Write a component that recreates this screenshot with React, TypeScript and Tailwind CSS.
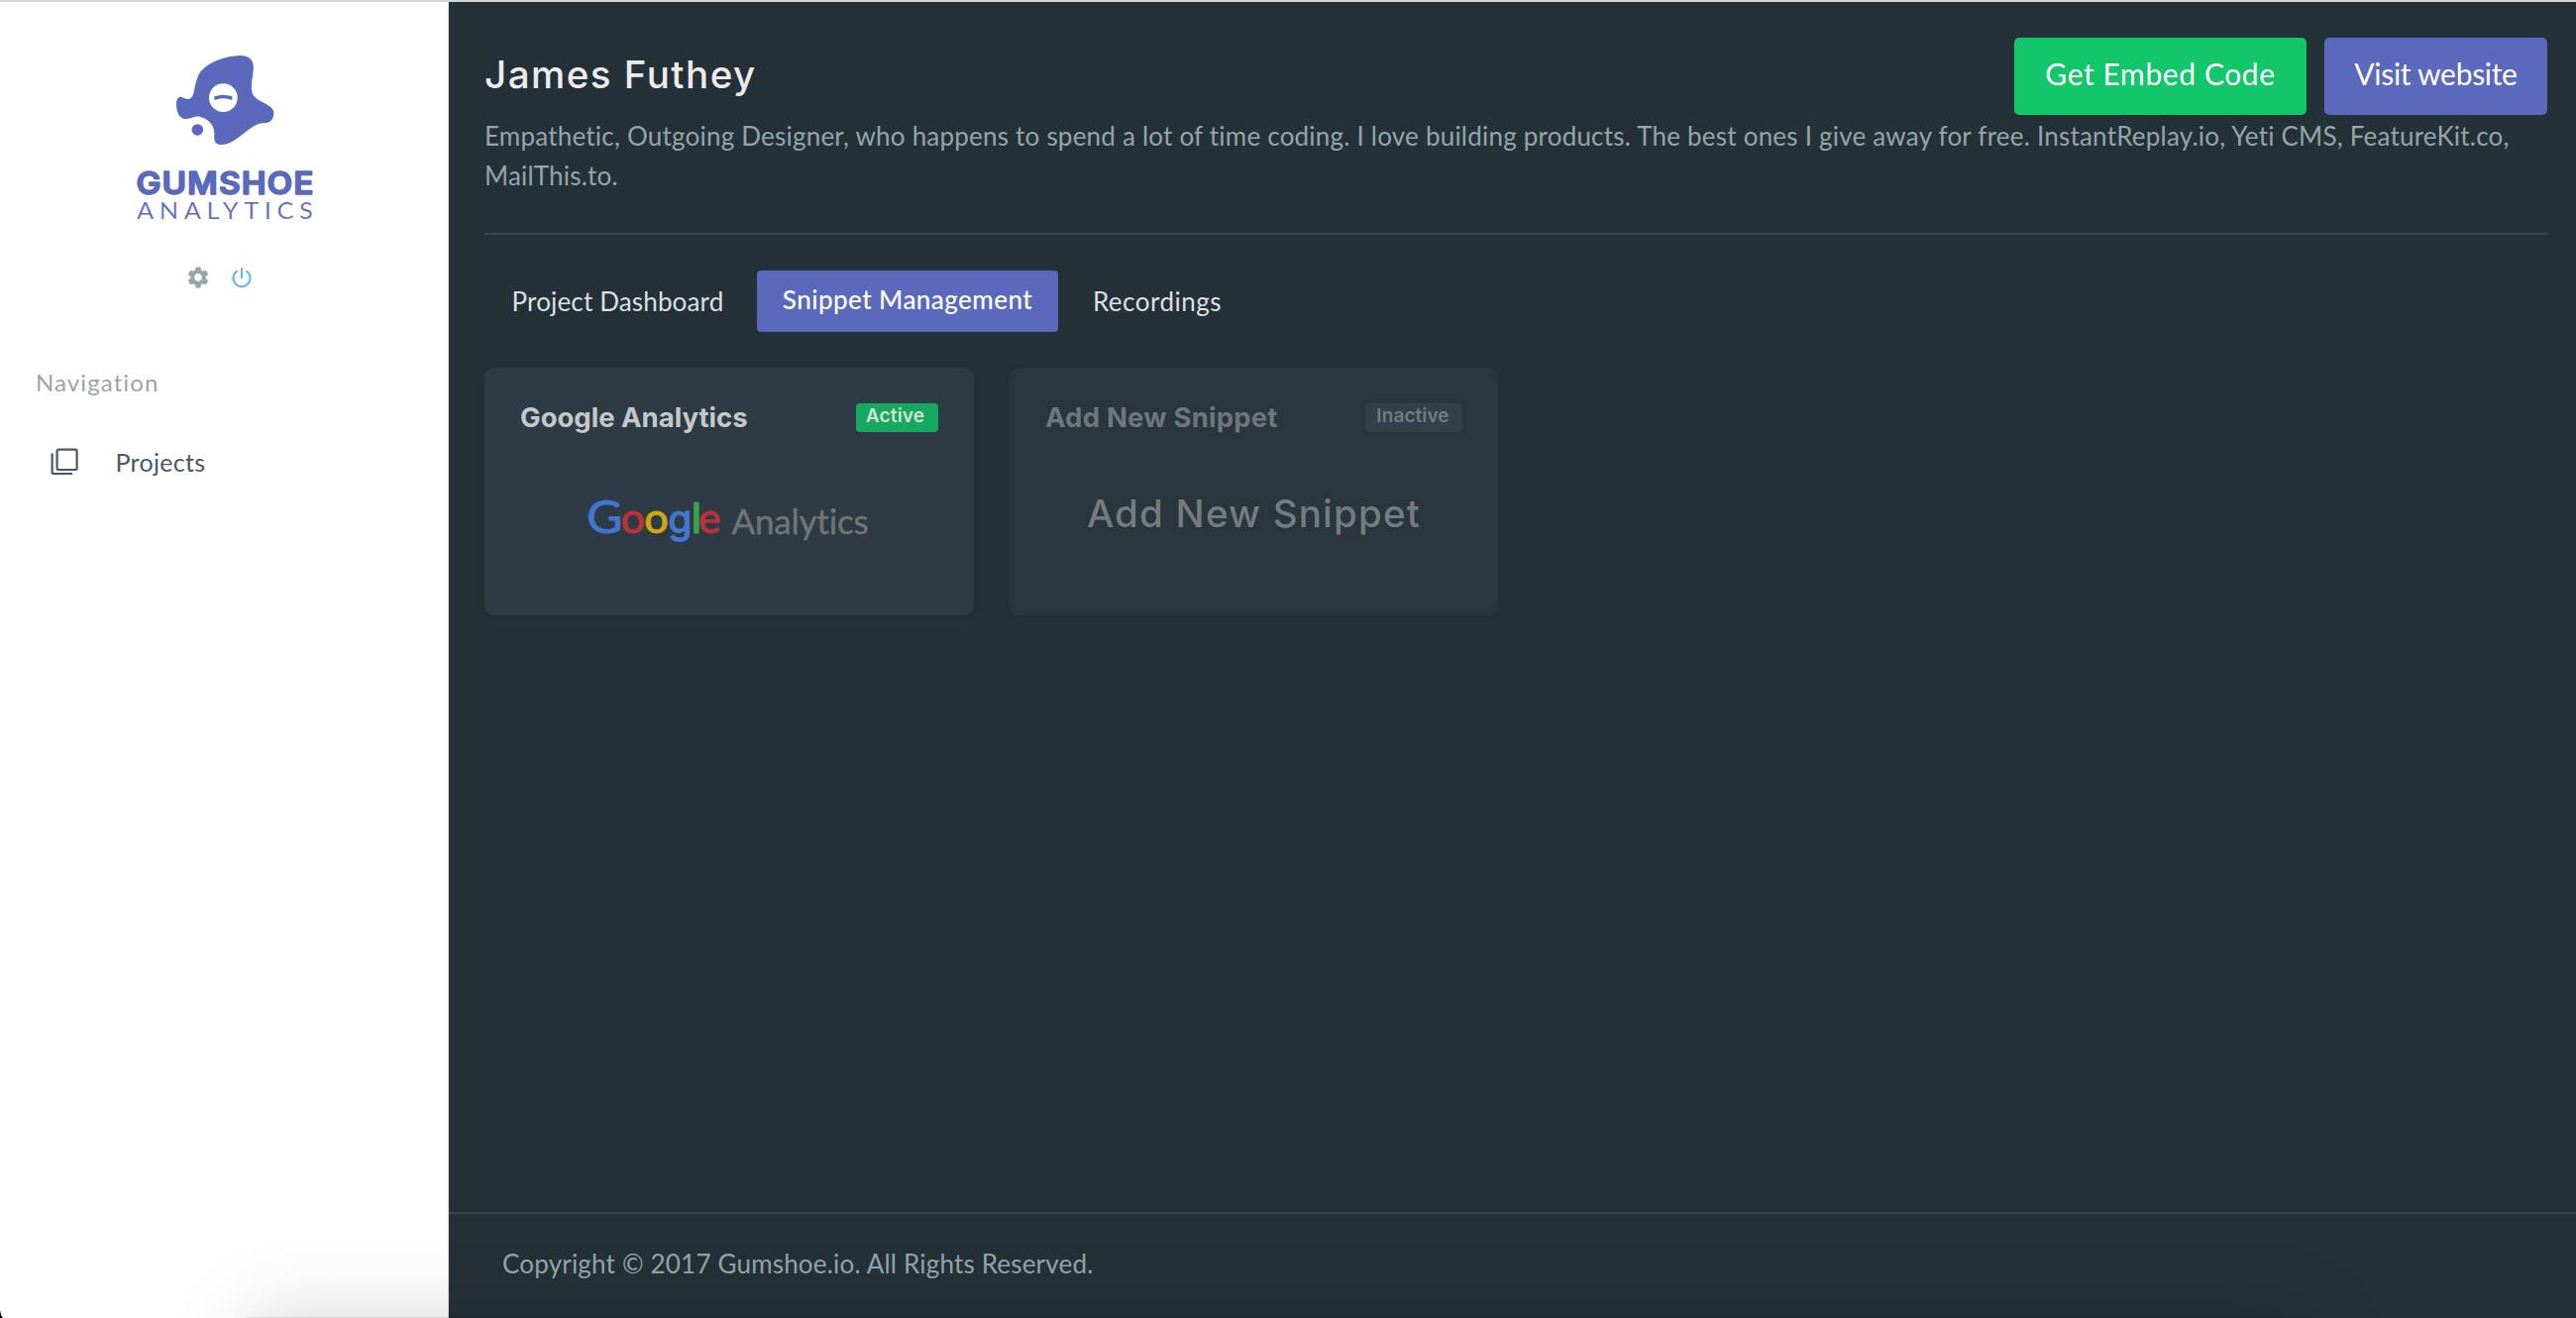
import type { ReactNode } from "react";
import { MdSettings } from "react-icons/md";

function BrandLogo() {
  return (
    <svg className="h-[180px] w-[190px]" viewBox="0 0 190 180" fill="#5a69bc" aria-label="Gumshoe Analytics">
      <g transform="translate(28 0) scale(0.33333)">
        <path d="M245 18C280 17 290 38 287 62C284 92 278 112 284 132C292 158 348 165 349 190C350 208 340 222 322 222C275 222 240 288 190 288C172 288 167 278 169 258C172 222 135 200 112 203C100 205 94 210 82 210C62 210 54 188 54 165C54 142 66 140 76 146C92 154 102 150 107 128C114 95 118 78 130 64C152 38 205 19 245 18Z" />
        <circle cx="196" cy="146" r="43" fill="#fff" />
        <path d="M169 142Q196 132 223 142V153Q196 143 169 153Z" />
        <circle cx="118" cy="243" r="17.5" />
      </g>
      <text x="5.5" y="145.5" fontFamily="Inter" fontWeight="600" fontSize="31.5" letterSpacing="1" textLength="180" lengthAdjust="spacingAndGlyphs" stroke="#5a69bc" strokeWidth="1.6" strokeLinejoin="round">
        GUMSHOE
      </text>
      <text x="6" y="170.5" fontFamily="Lato" fontWeight="400" fontSize="22.5" letterSpacing="5" textLength="183.5" lengthAdjust="spacingAndGlyphs" stroke="#fff" strokeWidth="0.2">
        ANALYTICS
      </text>
    </svg>
  );
}

function PowerIcon() {
  return (
    <svg className="h-[22px] w-[22px]" viewBox="0 0 22 22" fill="none" stroke="#64b1f4" strokeWidth="2" strokeLinecap="round">
      <path d="M11 2V11.2" />
      <path d="M6 4.8A8.5 8.5 0 1 0 16 4.8" />
    </svg>
  );
}

function ProjectsIcon() {
  return (
    <svg className="h-7 w-7" viewBox="0 0 28 28" fill="none" stroke="#445a66" strokeWidth="2.2">
      <rect x="6.6" y="1.6" width="20" height="20.4" rx="1.6" />
      <path d="M1.6 5.5V24.2Q1.6 26 3.4 26H22" />
    </svg>
  );
}

function GoogleAnalyticsLogo() {
  return (
    <svg className="h-[70px] w-[310px]" viewBox="0 0 310 70" strokeWidth="0.8" strokeLinejoin="round">
      <g fontFamily="Lato" fontSize="43" fontWeight="500">
        <text x="7" y="48.2" fontSize="46" fontWeight="400" fill="#4276cf" stroke="#4276cf" textLength="36.5" lengthAdjust="spacingAndGlyphs">G</text>
        <text x="41.6" y="48.2" fill="#bb3236" stroke="#bb3236">o</text>
        <text x="65.2" y="48.2" fill="#cfa615" stroke="#cfa615">o</text>
        <text x="89.2" y="48.2" fontFamily="Inter" fontSize="39" fill="#4276cf" stroke="#4276cf">g</text>
        <text x="112.4" y="48.2" fontFamily="Inter" fill="#36a353" stroke="#36a353">l</text>
        <text x="119.8" y="48.2" fill="#bb3236" stroke="#bb3236">e</text>
      </g>
      <text x="153.5" y="48.5" fontFamily="Lato" fontSize="35" letterSpacing="-0.2" fill="#717577" stroke="#717577" strokeWidth="0.4">Analytics</text>
    </svg>
  );
}

function Tab({ children, className }: { children: ReactNode; className: string }) {
  return <a className={`flex h-[62px] items-center justify-center rounded-[4px] text-[26px] whitespace-nowrap ${className}`}>{children}</a>;
}

export default function App() {
  return (
    <div className="relative flex h-[1330px] w-[2600px] overflow-hidden border-t-2 border-[#d3d5d6] bg-[#253138] font-[Lato,sans-serif]">
      <aside className="flex w-[453px] shrink-0 flex-col border-r border-[#d5d8da] bg-white">
        <div className="flex justify-center pt-12 pl-0.5">
          <BrandLogo />
        </div>
        <div className="mt-[37px] flex items-center pl-[187px]">
          <MdSettings className="h-[26px] w-[26px] text-[#97a6ad]" />
          <div className="ml-5">
            <PowerIcon />
          </div>
        </div>
        <div className="mt-[73px] pl-[36px] text-[24px] leading-[40px] tracking-[1.1px] text-[#97a6ad]">Navigation</div>
        <a className="mt-[40px] flex items-center pl-[51px] text-[25px] leading-[40px] tracking-[0.3px] text-[#445a66]">
          <ProjectsIcon />
          <span className="ml-[37.5px]">Projects</span>
        </a>
      </aside>

      <main className="flex flex-1 flex-col">
        <section className="px-9 pt-9 pr-[29px]">
          <header className="flex h-[79px] items-start justify-between">
            <h1 className="pt-[13px] font-[Inter,sans-serif] text-[38.5px] leading-[48px] font-medium tracking-[1.5px] text-[#ececec]">James Futhey</h1>
            <div className="flex gap-[18px] text-[30px] text-white">
              <button className="h-[78px] w-[295px] rounded-[5px] bg-[#12c66a] pb-1.5 tracking-[0.6px]">Get Embed Code</button>
              <button className="h-[78px] w-[225px] rounded-[5px] bg-[#5b69bc] pb-1.5 tracking-[-0.3px]">Visit website</button>
            </div>
          </header>
          <p className="text-[26px] leading-[40px] tracking-[0.215px] text-[#93a5ad]">
            Empathetic, Outgoing Designer, who happens to spend a lot of time coding. I love building products. The best ones I give away for free. InstantReplay.io, Yeti CMS, FeatureKit.co,
            <br />
            MailThis.to.
          </p>
          <hr className="mt-[38px] border-t-2 border-[#37464f]" />

          <nav className="mt-9 flex">
            <Tab className="w-[269px] tracking-[0.15px] text-[#dedfe0]">Project Dashboard</Tab>
            <Tab className="ml-1.5 w-[304px] bg-[#5b69bc] pb-1 font-medium tracking-[0.45px] text-white">Snippet Management</Tab>
            <Tab className="ml-1.5 w-[188px] tracking-[0.5px] text-[#dedfe0]">Recordings</Tab>
          </nav>

          <div className="mt-9 flex gap-9">
            <article className="h-[250px] w-[494px] rounded-[9px] bg-[#2e3b44] pt-[30px] shadow-[0_1px_6px_rgba(0,0,0,0.12)]">
              <div className="flex h-10 items-center justify-between px-9 font-[Inter,sans-serif]">
                <h2 className="pt-0.5 text-[27.5px] font-bold text-[#c5c8ca]">Google Analytics</h2>
                <span className="flex h-[29px] w-[83px] items-center justify-center rounded-[4px] bg-[#17a85f] pr-1 pb-px text-[19px] font-semibold tracking-[0.2px] text-[#cfe3d9]">Active</span>
              </div>
              <div className="mt-[49px] pl-24">
                <GoogleAnalyticsLogo />
              </div>
            </article>
            <article className="h-[250px] w-[493px] rounded-[9px] bg-[#29363e] pt-[30px] shadow-[0_1px_6px_rgba(0,0,0,0.06)]">
              <div className="flex h-10 items-center justify-between px-9 font-[Inter,sans-serif]">
                <h2 className="pt-0.5 text-[27.5px] font-bold tracking-[0.2px] text-[#6f767c]">Add New Snippet</h2>
                <span className="flex h-[29px] w-[98px] items-center justify-center rounded-[4px] bg-[#353f49] pr-0.5 pb-px text-[19px] font-semibold tracking-[0.1px] text-[#717b80]">Inactive</span>
              </div>
              <div className="mt-[53px] text-center font-[Inter,sans-serif] text-[38.5px] leading-[48px] font-medium tracking-[1.2px] text-[#757b7e]">Add New Snippet</div>
            </article>
          </div>
        </section>

        <footer className="mt-auto h-[107px] border-t-2 border-[#37464f] pt-[30px] pl-[54px] text-[26px] leading-[40px] tracking-[0.19px] text-[#93a5ad]">
          Copyright © 2017 Gumshoe.io. All Rights Reserved.
        </footer>
      </main>

      <div className="pointer-events-none absolute top-full left-[250px] h-20 w-[2085px] shadow-[0_0_80px_rgba(0,0,0,0.17),0_0_2px_rgba(0,0,0,0.3)]" />
      <svg className="absolute bottom-0 left-0 h-2 w-[3px]" viewBox="0 0 3 8">
        <path d="M0 0Q.4 5 3 8H0Z" fill="#000" />
      </svg>
    </div>
  );
}
